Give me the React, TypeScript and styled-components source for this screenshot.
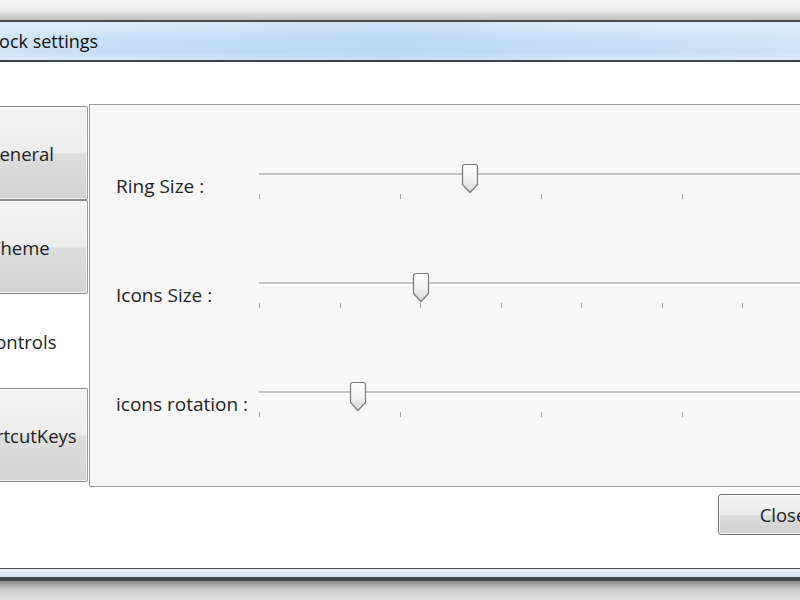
import { createGlobalStyle } from 'styled-components';
import styled from 'styled-components';

const Global = createGlobalStyle`
  html, body {
    margin: 0;
    padding: 0;
    background: #f4f4f4;
  }
  body {
    font-family: "Open Sans", "Noto Sans", "Liberation Sans", sans-serif;
    color: #1e1e1e;
  }
`

const Screen = styled.div`
  width: 800px;
  height: 600px;
  overflow: hidden;
  background: linear-gradient(#f5f5f5 0px, #ececec 10px, #c4c4c4 19px);
`

const TopShade = styled.div`
  height: 20px;
`

const Window = styled.div`
  width: 900px;
  margin-left: -48px;
  border-top: 2px solid #4b4b4b;
  background: #fff;
`

const TitleBar = styled.div`
  height: 38px;
  display: flex;
  align-items: center;
  padding-left: 34px;
  font-size: 18px;
  color: #111;
  background:
    linear-gradient(90deg, rgba(255,255,255,0.25) 0px, rgba(255,255,255,0) 180px, rgba(160,195,230,0.25) 440px, rgba(255,255,255,0) 620px, rgba(255,255,255,0.2) 900px),
    linear-gradient(#dcecfb, #c7e0f7 45%, #c4ddf5 80%, #d3e7f9);
  border-bottom: 2px solid #3f4448;
`

const Body = styled.div`
  padding-top: 42px;
  height: 507px;
  box-sizing: border-box;
  background: #fff;
  border-bottom: 1px solid #4a4f55;
`

const TabControl = styled.div`
  display: flex;
  align-items: flex-start;
`

const TabStrip = styled.div`
  width: 136px;
  padding-top: 2px;
  display: flex;
  flex-direction: column;
`

const Tab = styled.button<{ $selected?: boolean }>`
  height: 94px;
  width: 136px;
  margin: 0;
  padding: 0;
  font-family: inherit;
  font-size: 18.5px;
  color: #1e1e1e;
  border: 1px solid ${p => (p.$selected ? 'transparent' : '#8a8a8a')};
  border-right-color: ${p => (p.$selected ? 'transparent' : '#9a9a9a')};
  border-radius: 2px;
  background: ${p =>
    p.$selected
      ? 'transparent'
      : 'linear-gradient(#f4f4f4 0%, #ececec 50%, #dedede 51%, #d3d3d3 100%)'};
  box-shadow: ${p => (p.$selected ? 'none' : 'inset 0 0 0 1px rgba(255,255,255,0.7)')};
`

const Panel = styled.div`
  flex: 1;
  height: 383px;
  margin-left: 1px;
  box-sizing: border-box;
  border: 1px solid #9c9c9c;
  background: #f8f8f8;
  padding: 58px 0 0 26px;
  display: flex;
  flex-direction: column;
  gap: 69px;
`

const Row = styled.div`
  display: grid;
  grid-template-columns: 143px 564px;
  align-items: start;
  height: 40px;
`

const Label = styled.div`
  font-size: 19px;
  line-height: 24px;
  padding-top: 11px;
  color: #222;
  white-space: nowrap;
`

const SliderBox = styled.div`
  position: relative;
  height: 40px;
`

const Track = styled.div`
  position: absolute;
  left: 0;
  right: 0;
  top: 10px;
  height: 2px;
  background: #c3c3c3;
  border-bottom: 1px solid #ffffff;
`

const Tick = styled.div`
  position: absolute;
  top: 31px;
  width: 1px;
  height: 5px;
  background: #a5a5a5;
`

const Thumb = styled.div`
  position: absolute;
  top: 0;
  width: 18px;
  height: 31px;
  margin-left: -9px;
`

const Footer = styled.div`
  display: flex;
  justify-content: flex-end;
  padding: 7px 4px 0 0;
`

const CloseButton = styled.button`
  width: 130px;
  height: 41px;
  font-family: inherit;
  font-size: 18.5px;
  color: #1e1e1e;
  border: 1px solid #707070;
  border-radius: 3px;
  background: linear-gradient(#f3f3f3 0%, #ebebeb 50%, #dddddd 51%, #cfcfcf 100%);
  box-shadow: inset 0 0 0 1px rgba(255,255,255,0.8);
`

const BottomFrame = styled.div`
  height: 8px;
  background: linear-gradient(#e9f1fa, #d6e4f3);
  border-bottom: 4px solid #414548;
`

const BottomShade = styled.div`
  height: 20px;
  background: linear-gradient(#8a8a8a, #c9c9c9 40%, #e6e6e6);
`

function SliderThumb() {
  return (
    <svg viewBox="0 0 18 31" width="18" height="31">
      <defs>
        <linearGradient id="tg" x1="0" y1="0" x2="0" y2="1">
          <stop offset="0" stopColor="#ffffff" />
          <stop offset="0.5" stopColor="#f2f2f2" />
          <stop offset="1" stopColor="#d6d6d6" />
        </linearGradient>
      </defs>
      <path
        d="M3.5 1.5 H14.5 A2 2 0 0 1 16.5 3.5 V21.5 L9 29.5 L1.5 21.5 V3.5 A2 2 0 0 1 3.5 1.5 Z"
        fill="url(#tg)"
        stroke="#7a7a7a"
        strokeWidth="1.2"
      />
    </svg>
  )
}

type SliderProps = { value: number; ticks: number }

function Slider({ value, ticks }: SliderProps) {
  const width = 564
  const marks = Array.from({ length: ticks + 1 }, (_, i) => Math.round((i * width) / ticks))
  return (
    <SliderBox>
      <Track />
      {marks.map(x => (
        <Tick key={x} style={{ left: x }} />
      ))}
      <Thumb style={{ left: Math.round(value * width) }}>
        <SliderThumb />
      </Thumb>
    </SliderBox>
  )
}

const settings = [
  { label: 'Ring Size :', value: 0.374, ticks: 4 },
  { label: 'Icons Size :', value: 0.288, ticks: 7 },
  { label: 'icons rotation :', value: 0.175, ticks: 4 },
]

export default function App() {
  return (
    <Screen>
      <Global />
      <TopShade />
      <Window>
        <TitleBar>Dock settings</TitleBar>
        <Body>
          <TabControl>
            <TabStrip>
              <Tab>General</Tab>
              <Tab>Theme</Tab>
              <Tab $selected>Controls</Tab>
              <Tab>ShortcutKeys</Tab>
            </TabStrip>
            <Panel>
              {settings.map(s => (
                <Row key={s.label}>
                  <Label>{s.label}</Label>
                  <Slider value={s.value} ticks={s.ticks} />
                </Row>
              ))}
            </Panel>
          </TabControl>
          <Footer>
            <CloseButton>Close</CloseButton>
          </Footer>
        </Body>
        <BottomFrame />
        <BottomShade />
      </Window>
    </Screen>
  )
}
